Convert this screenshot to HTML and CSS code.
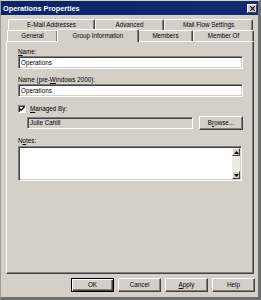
FILE: index.html
```html
<!DOCTYPE html>
<html>
<head>
<meta charset="utf-8">
<link rel="stylesheet" href="styles.css">
</head>
<body>
<div class="window">
  <div class="titlebar">
    <span class="title">Operations Properties</span>
    <span class="close"><svg width="5" height="5" viewBox="0 0 5 5"><path d="M0 0L5 5M5 0L0 5" stroke="#000" stroke-width="1.2"/></svg></span>
  </div>
  <div class="content">
    <div class="tabrow back">
      <div class="tab w-email">E-Mail Addresses</div>
      <div class="tab w-adv">Advanced</div>
      <div class="tab w-mail">Mail Flow Settings</div>
    </div>
    <div class="tabrow front">
      <div class="tab w-gen">General</div>
      <div class="tab w-grp selected">Group Information</div>
      <div class="tab w-mem">Members</div>
      <div class="tab w-memof">Member Of</div>
    </div>
    <div class="panel">
      <div class="label"><u>N</u>ame:</div>
      <div class="input">Operations</div>
      <div class="label gap">Name (pre-<u>W</u>indows 2000):</div>
      <div class="input">Operations</div>
      <div class="checkrow">
        <span class="checkbox"><svg width="6" height="6" viewBox="0 0 6 6"><path d="M0.5 2.5L2 4.2L5.5 0.8" stroke="#000" stroke-width="1.3" fill="none"/></svg></span>
        <span class="label"><u>M</u>anaged By:</span>
      </div>
      <div class="managedrow">
        <div class="input disabled">Julie Cahill</div>
        <div class="button browse">B<u>r</u>owse...</div>
      </div>
      <div class="label gap">N<u>o</u>tes:</div>
      <div class="input notes">
        <div class="scrollbar">
          <span class="sbtn"><svg width="5" height="3" viewBox="0 0 5 3"><path d="M0 3L2.5 0L5 3Z" fill="#000"/></svg></span>
          <span class="track"></span>
          <span class="sbtn"><svg width="5" height="3" viewBox="0 0 5 3"><path d="M0 0L2.5 3L5 0Z" fill="#000"/></svg></span>
        </div>
      </div>
    </div>
    <div class="buttons">
      <div class="button default">OK</div>
      <div class="button">Cancel</div>
      <div class="button"><u>A</u>pply</div>
      <div class="button">Help</div>
    </div>
  </div>
</div>
</body>
</html>
```

FILE: styles.css
```css
* { box-sizing: border-box; }
html, body { margin: 0; padding: 0; background: #d4d0c8; }
body {
  font-family: "Liberation Sans", Arial, sans-serif;
  font-size: 6.3px;
  color: #000;
}
.window {
  width: 261px;
  height: 300px;
  background: #d4d0c8;
  border-left: 1px solid #9a9a9a;
  border-top: 1px solid #d4d0c8;
  border-right: 3px solid #6e6e6e;
  border-bottom: 3px solid #6e6e6e;
  display: flex;
  flex-direction: column;
}
.titlebar {
  height: 14px;
  background: linear-gradient(to right, #0a246a, #112c72);
  display: flex;
  align-items: center;
  justify-content: space-between;
  padding: 0 1px 0 2px;
}
.title {
  color: #fff;
  font-weight: bold;
  font-size: 7.3px;
  line-height: 9px;
}
.close {
  width: 10px;
  height: 9px;
  background: #d4d0c8;
  border: 1px solid;
  border-color: #fff #404040 #404040 #fff;
  display: flex;
  align-items: center;
  justify-content: center;
}
.close svg { display: block; }
.content {
  flex: 1;
  padding: 4px 3px 0 5px;
  display: flex;
  flex-direction: column;
}
.tabrow { display: flex; height: 11px; }
.tabrow.back { margin-left: 2px; }
.tabrow.front { margin-left: 1px; }
.tab {
  height: 11px;
  border-top: 1px solid #fff;
  border-left: 1px solid #fff;
  border-right: 1px solid #404040;
  box-shadow: inset -1px 0 0 #808080;
  border-radius: 2px 2px 0 0;
  text-align: center;
  line-height: 10px;
  background: #d4d0c8;
}
.w-email { width: 87px; }
.w-adv { width: 69px; }
.w-mail { width: 89px; }
.w-gen { width: 51px; }
.w-grp { width: 80px; }
.w-mem { width: 55px; }
.w-memof { width: 61px; }
.tab.selected {
  position: relative;
  z-index: 1;
  width: 82px;
  height: 13px;
  margin: -1px -1px -1px -1px;
  line-height: 11px;
}
.panel {
  width: 248px;
  height: 233px;
  border-top: 1px solid #fff;
  border-left: 1px solid #fff;
  border-right: 1px solid #404040;
  border-bottom: 1px solid #404040;
  box-shadow: inset -1px -1px 0 #808080;
  padding: 6px 0 0 11px;
  display: flex;
  flex-direction: column;
}
.label { line-height: 8px; }
.label.gap { margin-top: 7px; }
.input {
  width: 225px;
  height: 13px;
  background: #fff;
  border-top: 1px solid #808080;
  border-left: 1px solid #808080;
  border-right: 1px solid #fff;
  border-bottom: 1px solid #fff;
  box-shadow: inset 1px 1px 0 #404040, inset -1px -1px 0 #d4d0c8;
  padding: 0 2px;
  line-height: 11px;
}
.checkrow {
  margin-top: 7px;
  height: 9px;
  display: flex;
  align-items: center;
  gap: 4px;
}
.checkbox {
  width: 8px;
  height: 8px;
  background: #fff;
  border-top: 1px solid #808080;
  border-left: 1px solid #808080;
  border-right: 1px solid #fff;
  border-bottom: 1px solid #fff;
  box-shadow: inset 1px 1px 0 #404040;
  display: flex;
  align-items: center;
  justify-content: center;
}
.checkbox svg { display: block; }
.managedrow {
  margin-top: 3px;
  margin-left: 9px;
  height: 14px;
  display: flex;
  align-items: center;
  gap: 6px;
}
.input.disabled {
  width: 166px;
  height: 12px;
  background: #d4d0c8;
  line-height: 10px;
}
.button {
  width: 43px;
  height: 14px;
  background: #d4d0c8;
  border-top: 1px solid #fff;
  border-left: 1px solid #fff;
  border-right: 1px solid #404040;
  border-bottom: 1px solid #404040;
  box-shadow: inset -1px -1px 0 #808080;
  text-align: center;
  line-height: 12px;
}
.button.browse { width: 44px; }
.button.default {
  border: 1px solid #000;
  box-shadow: inset 1px 1px 0 #fff, inset -1px -1px 0 #404040, inset -2px -2px 0 #808080;
}
.input.notes {
  margin-top: 1px;
  width: 224px;
  height: 35px;
  padding: 1px 1px 1px 0;
  display: flex;
  justify-content: flex-end;
}
.scrollbar {
  width: 8px;
  display: flex;
  flex-direction: column;
}
.sbtn {
  height: 8px;
  background: #d4d0c8;
  border-top: 1px solid #fff;
  border-left: 1px solid #fff;
  border-right: 1px solid #404040;
  border-bottom: 1px solid #404040;
  display: flex;
  align-items: center;
  justify-content: center;
}
.sbtn svg { display: block; }
.track {
  flex: 1;
  background: #ecebe6;
}
.buttons {
  margin-top: 4px;
  width: 249px;
  display: flex;
  justify-content: flex-end;
  gap: 4px;
}
```
